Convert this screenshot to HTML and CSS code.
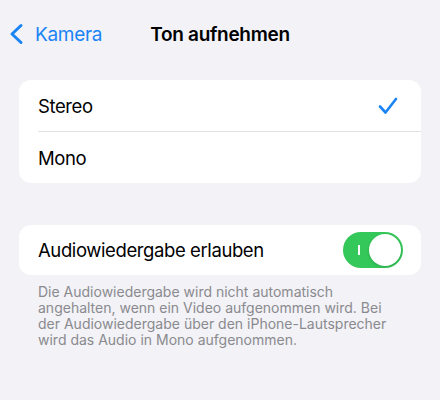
FILE: index.html
```html
<!DOCTYPE html>
<html lang="de">
<head>
  <meta charset="UTF-8">
  <meta name="viewport" content="width=device-width, initial-scale=1.0">
  <title>Ton aufnehmen</title>
  <link rel="stylesheet" href="styles.css">
</head>
<body>
  <!-- Navigation -->
  <div class="nav">
    <a class="back" href="#">
      <svg class="chevron" width="15" height="22" viewBox="0 0 15 22">
        <path d="M12 2.5 L3 11 L12 19.5" fill="none" stroke="#1a84f5" stroke-width="3" stroke-linecap="round" stroke-linejoin="round"/>
      </svg>
      <span>Kamera</span>
    </a>
    <div class="title">Ton aufnehmen</div>
    <div></div>
  </div>

  <!-- Stereo / Mono -->
  <div class="group">
    <div class="row">
      <div class="row-body">
        <span>Stereo</span>
        <svg class="check" width="20" height="18" viewBox="0 0 20 18">
          <path d="M2 9.5 L7.5 15.5 L18 2" fill="none" stroke="#1a84f5" stroke-width="2.6" stroke-linecap="round" stroke-linejoin="round"/>
        </svg>
      </div>
    </div>
    <div class="row">
      <div class="row-body">
        <span>Mono</span>
      </div>
    </div>
  </div>

  <!-- Audio playback -->
  <div class="group second">
    <div class="row toggle-row">
      <div class="row-body">
        <span>Audiowiedergabe erlauben</span>
        <div class="switch on">
          <span class="switch-mark"></span>
          <span class="knob"></span>
        </div>
      </div>
    </div>
  </div>
  <p class="footnote">Die Audiowiedergabe wird nicht automatisch<br>angehalten, wenn ein Video aufgenommen wird. Bei<br>der Audiowiedergabe über den iPhone-Lautsprecher<br>wird das Audio in Mono aufgenommen.</p>
</body>
</html>
```

FILE: styles.css
```css
body {
  margin: 0;
  background: #f2f2f7;
  font-family: Inter, "Noto Sans", sans-serif;
  color: #000;
  -webkit-font-smoothing: antialiased;
}
.nav {
  display: grid;
  grid-template-columns: 1fr auto 1fr;
  align-items: center;
  height: 68px;
}
.back {
  display: flex;
  align-items: center;
  gap: 11px;
  padding-left: 9px;
  color: #1a84f5;
  text-decoration: none;
  font-size: 19px;
  letter-spacing: -0.3px;
}
.title {
  font-size: 19px;
  font-weight: 600;
  letter-spacing: -0.3px;
}
.group {
  margin: 12px 19px 0;
  background: #fff;
  border-radius: 12px;
}
.group.second {
  margin-top: 42px;
}
.row {
  padding-left: 19px;
  font-size: 18.5px;
  letter-spacing: -0.4px;
}
.row-body {
  display: flex;
  align-items: center;
  justify-content: space-between;
  height: 51px;
  padding-right: 23px;
}
.row + .row .row-body {
  border-top: 1px solid #e2e2e6;
}
.toggle-row .row-body {
  height: 50px;
  padding-right: 18px;
}
.switch {
  position: relative;
  width: 60px;
  height: 36px;
  border-radius: 18px;
  background: #34c759;
}
.switch-mark {
  position: absolute;
  left: 15px;
  top: 13px;
  width: 1.5px;
  height: 10px;
  background: #fff;
}
.knob {
  position: absolute;
  right: 2px;
  top: 2px;
  width: 32px;
  height: 32px;
  border-radius: 50%;
  background: #fff;
  box-shadow: 0 1px 3px rgba(0, 0, 0, 0.15);
}
.footnote {
  margin: 9px 0 0;
  padding: 0 10px 0 38px;
  font-size: 14px;
  line-height: 16px;
  white-space: nowrap;
  color: #8a8a8e;
}
```
